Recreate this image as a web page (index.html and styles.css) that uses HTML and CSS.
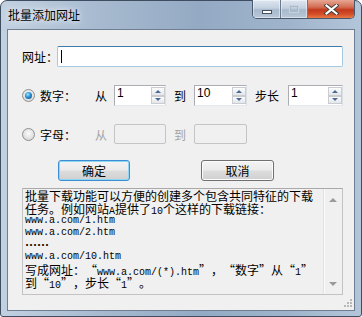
FILE: index.html
```html
<!DOCTYPE html>
<html lang="zh-CN">
<head>
    <meta charset="UTF-8">
    <title>批量添加网址</title>
    <link rel="stylesheet" href="styles.css">
</head>
<body>
    <div class="window">
        <div class="titlebar">
            <span class="title">批量添加网址</span>
            <div class="caption">
                <span class="cap-btn min"><i></i></span>
                <span class="cap-btn max"><i></i></span>
                <span class="cap-btn close">
                    <svg width="15" height="11" viewBox="0 0 15 11">
                        <path d="M2.5 1.5 L12.5 9.5 M12.5 1.5 L2.5 9.5" stroke="#3b3b3b" stroke-width="4" stroke-linecap="square"/>
                        <path d="M2.5 1.5 L12.5 9.5 M12.5 1.5 L2.5 9.5" stroke="#fff" stroke-width="2.2" stroke-linecap="square"/>
                    </svg>
                </span>
            </div>
        </div>

        <div class="client">
            <div class="row url-row">
                <span class="label url-label">网址：</span>
                <div class="textbox focused"><span class="caret"></span></div>
            </div>

            <div class="row range-row">
                <span class="radio checked"></span>
                <span class="label kind">数字：</span>
                <span class="word from">从</span>
                <div class="spin s1"><span class="val">1</span><span class="arrows"><b class="up"></b><b class="down"></b></span></div>
                <span class="word to">到</span>
                <div class="spin s2"><span class="val">10</span><span class="arrows"><b class="up"></b><b class="down"></b></span></div>
                <span class="word step">步长</span>
                <div class="spin s3"><span class="val">1</span><span class="arrows"><b class="up"></b><b class="down"></b></span></div>
            </div>

            <div class="row letter-row">
                <span class="radio"></span>
                <span class="label kind">字母：</span>
                <span class="word from off">从</span>
                <div class="spin s1 off"></div>
                <span class="word to off">到</span>
                <div class="spin s2 off"></div>
            </div>

            <div class="row btn-row">
                <button class="btn default">确定</button>
                <button class="btn cancel">取消</button>
            </div>

            <div class="memo">
                <div class="memo-text">
                    <p class="cn">批量下载功能可以方便的创建多个包含共同特征的下载</p>
                    <p class="cn">任务。例如网站<span class="en">A</span>提供了<span class="en">10</span>个这样的下载链接：</p>
                    <p class="en-line">www.a.com/1.htm</p>
                    <p class="en-line">www.a.com/2.htm</p>
                    <p class="en-line dots">……</p>
                    <p class="en-line">www.a.com/10.htm</p>
                    <p class="cn">写成网址：<q class="lq">“</q><span class="en">www.a.com/(*).htm</span><q class="rq">”</q>，<q class="lq">“</q>数字<q class="rq">”</q>从<q class="lq">“</q><span class="en">1</span><q class="rq">”</q></p>
                    <p class="cn">到<q class="lq">“</q><span class="en">10</span><q class="rq">”</q>，步长<q class="lq">“</q><span class="en">1</span><q class="rq">”</q>。</p>
                </div>
                <div class="scrollbar">
                    <span class="arrow up"></span>
                    <span class="arrow down"></span>
                </div>
            </div>

            <svg class="grip" width="8" height="8" viewBox="0 0 8 8">
                <rect x="6" y="0" width="2" height="2" fill="#b8b8b8"/>
                <rect x="3" y="3" width="2" height="2" fill="#b8b8b8"/>
                <rect x="6" y="3" width="2" height="2" fill="#b8b8b8"/>
                <rect x="0" y="6" width="2" height="2" fill="#b8b8b8"/>
                <rect x="3" y="6" width="2" height="2" fill="#b8b8b8"/>
                <rect x="6" y="6" width="2" height="2" fill="#b8b8b8"/>
            </svg>
        </div>
    </div>
</body>
</html>
```

FILE: styles.css
```css
*{
    margin: 0;
    padding: 0;
    box-sizing: border-box;
}
body{
    width: 362px;
    height: 317px;
    overflow: hidden;
    font-family: "Noto Sans CJK SC", sans-serif;
    font-size: 12px;
    color: #000;
    background: #fff;
}

/* window frame */
.window{
    width: 362px;
    height: 317px;
    border: 1px solid #3e4d60;
    border-radius: 7px 7px 3px 3px;
    background: linear-gradient(to right, #c2d1e1 0%, #a6b9cf 28%, #94aac4 55%, #9fb4cc 80%, #b3c5d9 100%);
    display: flex;
    flex-direction: column;
}
.titlebar{
    height: 28px;
    display: flex;
    padding: 0 6px 0 7px;
}
.title{
    font-size: 12px;
    line-height: 16px;
    padding-top: 6px;
    text-shadow: 0 0 5px #e8eef5, 0 0 8px #e8eef5;
}
.caption{
    margin-left: auto;
    display: flex;
    height: 19px;
    margin-top: -1px;
    border: 1px solid #4a586c;
    border-top: none;
    border-radius: 0 0 5px 5px;
    overflow: hidden;
}
.cap-btn{
    display: flex;
    align-items: center;
    justify-content: center;
    height: 100%;
}
.min, .max{
    background: linear-gradient(#dfe7f0 0%, #c3d0df 45%, #a8b9cd 55%, #b9c8d9 100%);
    box-shadow: inset 0 0 0 1px rgba(255,255,255,0.45);
}
.min{
    width: 28px;
    border-right: 1px solid #6a7a8e;
}
.max{
    width: 27px;
    border-right: 1px solid #6a7a8e;
}
.min i{
    width: 10px;
    height: 4px;
    margin-top: 6px;
    background: #fff;
    border: 1px solid #45505e;
}
.max i{
    width: 10px;
    height: 8px;
    border: 1px solid #c8d3df;
    box-shadow: inset 0 0 0 1px #a9b7c7;
}
.close{
    width: 46px;
    background: linear-gradient(#e7a794 0%, #d26c52 40%, #c2381c 55%, #d4502a 80%, #ea7a45 100%);
}

/* client area */
.client{
    flex: 1;
    margin: 0 6px 5px;
    background: #f0f0f0;
    border: 1px solid #6f7e90;
    padding: 16px 11px 0 14px;
    position: relative;
}
.row{
    display: flex;
    align-items: center;
}
.label{
    white-space: nowrap;
}
.url-row{
    height: 21px;
}
.url-label{
    width: 35px;
}
.textbox{
    flex: 1;
    height: 21px;
    background: #fff;
    border: 1px solid #a6c9e2;
    border-top-color: #3d7bad;
    border-radius: 2px;
    padding: 3px 3px;
}
.caret{
    display: block;
    width: 1px;
    height: 13px;
    background: #000;
}

.range-row{
    margin-top: 18px;
    height: 21px;
}
.letter-row{
    margin-top: 18px;
    height: 20px;
}
.radio{
    width: 13px;
    height: 13px;
    border-radius: 50%;
    border: 1px solid #8e8f8f;
    background: radial-gradient(circle at 50% 40%, #fbfbfb 0%, #dcdcdc 70%, #cfcfcf 100%);
    margin-right: 5px;
    position: relative;
}
.radio.checked::after{
    content: "";
    position: absolute;
    left: 2px;
    top: 2px;
    width: 7px;
    height: 7px;
    border-radius: 50%;
    background: radial-gradient(circle at 40% 35%, #9ce4ff 0%, #2a8fd0 45%, #0c3f78 100%);
}
.kind{
    width: 55px;
}
.word{
    white-space: nowrap;
}
.from{
    width: 19px;
}
.to{
    width: 20px;
    margin-left: 8px;
}
.step{
    width: 33px;
    margin-left: 8px;
}
.off{
    color: #a3a3a3;
}
.spin{
    height: 21px;
    background: #fff;
    border: 1px solid #abadb3;
    border-right-color: #dbdfe6;
    border-bottom-color: #e3e9ef;
    display: flex;
    justify-content: space-between;
}
.letter-row .spin{
    height: 20px;
}
.spin.s1{
    width: 52px;
}
.spin.s2{
    width: 53px;
}
.spin.s3{
    flex: 1;
}
.spin.off{
    background: #f0f0f0;
    border: 1px solid #c4c4c4;
    border-radius: 2px;
}
.val{
    font-family: "Liberation Sans", sans-serif;
    font-size: 12px;
    line-height: 13px;
    padding: 1px 0 0 2px;
}
.arrows{
    width: 14px;
    display: flex;
    flex-direction: column;
    margin: 1px 0 1px;
}
.arrows b{
    flex: 1;
    border: 1px solid #c9ccd1;
    background: linear-gradient(#fcfcfc, #e4e6ea);
    display: flex;
    align-items: center;
    justify-content: center;
}
.arrows b::after{
    content: "";
    border-left: 3px solid transparent;
    border-right: 3px solid transparent;
}
.arrows .up::after{
    border-bottom: 3px solid #4d6a97;
}
.arrows .down::after{
    border-top: 3px solid #4d6a97;
}

/* buttons */
.btn-row{
    margin-top: 16px;
    height: 21px;
}
.btn{
    height: 21px;
    font-family: "Noto Sans CJK SC", sans-serif;
    font-size: 12px;
    color: #000;
    border: 1px solid #707070;
    border-radius: 3px;
    background: linear-gradient(#f3f3f3 0%, #ebebeb 48%, #dddddd 52%, #cfcfcf 100%);
    box-shadow: inset 0 0 0 1px #fcfcfc;
}
.btn.default{
    width: 72px;
    margin-left: 36px;
    border-color: #3c8ed2;
    box-shadow: inset 0 0 0 1px #8fd5f6;
}
.btn.cancel{
    width: 73px;
    margin-left: 71px;
}

/* read-only text box */
.memo{
    margin-top: 7px;
    height: 107px;
    border: 1px solid #c3c3c3;
    border-top-color: #a9a9a9;
    display: flex;
}
.memo-text{
    flex: 1;
    padding-left: 2px;
}
.memo-text p{
    white-space: nowrap;
}
.cn{
    font-size: 12px;
    line-height: 13px;
    height: 13px;
}
.cn q{
    quotes: none;
    display: inline-block;
    width: 12px;
}
.cn .lq{
    text-align: right;
}
.cn .rq{
    text-align: left;
}
.en, .en-line{
    font-family: "Liberation Mono", monospace;
    font-size: 10px;
}
.en-line{
    line-height: 12px;
    height: 12px;
}
.dots{
    font-family: "Noto Sans CJK SC", sans-serif;
    font-size: 12px;
    font-weight: bold;
}
.scrollbar{
    width: 19px;
    border-left: 1px solid #e2e2e2;
    box-shadow: inset 1px 0 0 #fafafa;
    display: flex;
    flex-direction: column;
    justify-content: space-between;
    align-items: center;
    padding: 9px 0 8px;
}
.arrow{
    border-left: 4px solid transparent;
    border-right: 4px solid transparent;
}
.arrow.up{
    border-bottom: 4px solid #9a9a9a;
}
.arrow.down{
    border-top: 4px solid #9a9a9a;
}

.grip{
    position: absolute;
    right: 2px;
    bottom: 3px;
}
```
